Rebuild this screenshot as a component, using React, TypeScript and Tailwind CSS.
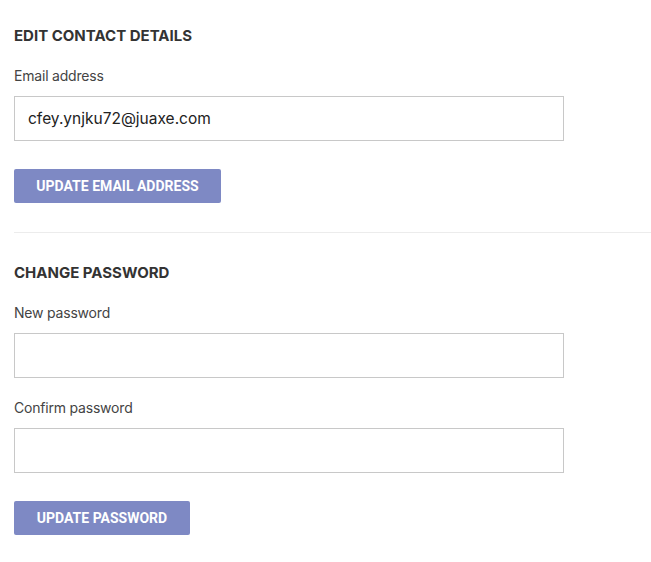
export default function App() {
  return (
    <div className="min-h-[562px] w-[651px] bg-white font-['Inter',sans-serif] text-[#333]">
      <div className="pl-[14px] pt-[27px]">
        <h2 className="text-[15px] font-bold leading-[17px] text-[#333]">EDIT CONTACT DETAILS</h2>
        <label className="mt-[23px] block text-[14px] leading-[17px] tracking-[-0.2px] text-[#444]">Email address</label>
        <input
          className="mt-[12px] block h-[45px] w-[550px] border border-[#c8c8c8] bg-white px-[13px] text-[15.5px] text-[#222] outline-none"
          defaultValue="cfey.ynjku72@juaxe.com"
        />
        <button className="mt-[28px] block h-[34px] w-[207px] rounded-[2px] bg-[#7e89c4] font-['Roboto',sans-serif] text-[14px] font-bold text-white">
          UPDATE EMAIL ADDRESS
        </button>
      </div>
      <div className="ml-[14px] mt-[29px] h-px bg-[#ececec]" />
      <div className="pl-[14px] pt-[31px]">
        <h2 className="text-[15px] font-bold leading-[17px] text-[#333]">CHANGE PASSWORD</h2>
        <label className="mt-[23px] block text-[14px] leading-[17px] tracking-[-0.2px] text-[#444]">New password</label>
        <input
          type="password"
          className="mt-[12px] block h-[45px] w-[550px] border border-[#c8c8c8] bg-white px-[13px] text-[15px] outline-none"
        />
        <label className="mt-[21px] block text-[14px] leading-[17px] tracking-[-0.2px] text-[#444]">Confirm password</label>
        <input
          type="password"
          className="mt-[12px] block h-[45px] w-[550px] border border-[#c8c8c8] bg-white px-[13px] text-[15px] outline-none"
        />
        <button className="mt-[28px] block h-[34px] w-[176px] rounded-[2px] bg-[#7e89c4] font-['Roboto',sans-serif] text-[14px] font-bold text-white">
          UPDATE PASSWORD
        </button>
      </div>
    </div>
  );
}
